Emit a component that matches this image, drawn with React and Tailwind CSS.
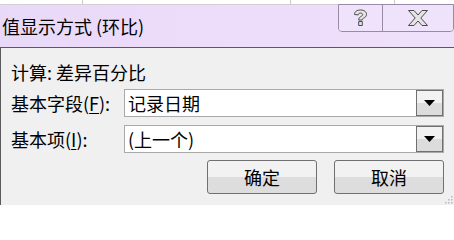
import { useState } from 'react';

const font = { fontFamily: '"Noto Sans CJK SC", "Noto Sans", sans-serif' };

function ArrowButton() {
  return (
    <div className="absolute right-0 top-0 h-full w-[27px] border border-[#707070] bg-gradient-to-b from-[#f2f2f2] from-50% to-[#dcdcdc] to-50% flex items-center justify-center">
      <svg width="11" height="6" viewBox="0 0 11 6">
        <polygon points="0,0 11,0 5.5,6" fill="#000" />
      </svg>
    </div>
  );
}

function Select({ value }) {
  return (
    <div className="relative w-[320px] h-[28px] bg-white border border-[#a9a9a9] flex items-center pl-[3px] text-[18px] leading-none">
      <span>{value}</span>
      <ArrowButton />
    </div>
  );
}

function Label({ text, hotkey }) {
  return (
    <span className="w-[113px] text-[18px] leading-none">
      {text}(<span className="underline underline-offset-2">{hotkey}</span>):
    </span>
  );
}

function DialogButton({ children }) {
  return (
    <button className="w-[110px] h-[34px] rounded-[3px] border border-[#707070] bg-gradient-to-b from-[#f2f2f2] from-50% to-[#dddddd] to-50% text-[18px] leading-none text-black">
      {children}
    </button>
  );
}

export default function App() {
  const [field] = useState('记录日期');
  const [item] = useState('(上一个)');

  return (
    <div className="w-[454px] h-[205px] overflow-hidden flex flex-col bg-white text-black" style={font}>
      {/* sheet behind the dialog */}
      <div className="h-[5px] flex border-b border-[#d0d0d0]">
        <div className="w-[83px] border-r border-[#c8c8c8]" />
        <div className="w-[208px] border-r border-[#c8c8c8]" />
        <div className="w-[104px] border-r border-[#c8c8c8]" />
      </div>

      {/* title bar */}
      <div className="h-[42px] flex items-start justify-between bg-gradient-to-r from-[#e9d9f8] via-[#eddcfa] to-[#efe0fb]">
        <span className="pl-[2px] pt-[12px] text-[18px] leading-none">值显示方式 (环比)</span>
        <div className="flex h-[28px] mt-[-1px] border border-[#9a8aa8] rounded-b-[4px] overflow-hidden">
          <div className="w-[44px] flex items-center justify-center border-r border-[#9a8aa8] bg-[#efe2fb]">
            <svg width="15" height="18" viewBox="0 0 15 18">
              <path
                d="M1.5 5.5 C1.5 2.5 4 1 7.5 1 C11 1 13.5 2.7 13.5 5.3 C13.5 7.5 12 8.4 10.3 9.3 C9.4 9.8 9.3 10.3 9.3 11 H5.7 C5.7 9.6 6 8.6 7.6 7.7 C9 6.9 9.6 6.5 9.6 5.5 C9.6 4.6 8.8 4.1 7.5 4.1 C6.1 4.1 5.3 4.8 5.3 5.9 Z M5.7 12.5 H9.3 V16.5 H5.7 Z"
                fill="#e6e6e6"
                stroke="#4a4a4a"
                strokeWidth="1"
                strokeLinejoin="round"
              />
            </svg>
          </div>
          <div className="w-[70px] flex items-center justify-center bg-[#efe2fb]">
            <svg width="20" height="16" viewBox="0 0 20 16">
              <path
                d="M0.5 0.5 H6 L10 5 L14 0.5 H19.5 L12.8 8 L19.5 15.5 H14 L10 11 L6 15.5 H0.5 L7.2 8 Z"
                fill="#e4e4e4"
                stroke="#4a4a4a"
                strokeWidth="1"
                strokeLinejoin="round"
              />
            </svg>
          </div>
        </div>
      </div>

      {/* body */}
      <div className="relative flex-1 bg-[#f0f0f0] border-t border-l border-[#5a5a5a] pl-[10px] pt-[12px]">
        <div className="h-[24px] flex items-center text-[18px] leading-none">计算: 差异百分比</div>
        <div className="mt-[5px] flex items-center">
          <Label text="基本字段" hotkey="F" />
          <Select value={field} />
        </div>
        <div className="mt-[8px] flex items-center">
          <Label text="基本项" hotkey="I" />
          <Select value={item} />
        </div>
        <div className="mt-[7px] flex justify-end gap-[17px] pr-[10px]">
          <DialogButton>确定</DialogButton>
          <DialogButton>取消</DialogButton>
        </div>
        {/* resize grip */}
        <svg className="absolute right-[1px] bottom-[1px]" width="8" height="8" viewBox="0 0 8 8">
          <rect x="6" y="0" width="1.5" height="1.5" fill="#b8b8b8" />
          <rect x="3" y="3" width="1.5" height="1.5" fill="#b8b8b8" />
          <rect x="6" y="3" width="1.5" height="1.5" fill="#b8b8b8" />
          <rect x="0" y="6" width="1.5" height="1.5" fill="#b8b8b8" />
          <rect x="3" y="6" width="1.5" height="1.5" fill="#b8b8b8" />
          <rect x="6" y="6" width="1.5" height="1.5" fill="#b8b8b8" />
        </svg>
      </div>
    </div>
  );
}
